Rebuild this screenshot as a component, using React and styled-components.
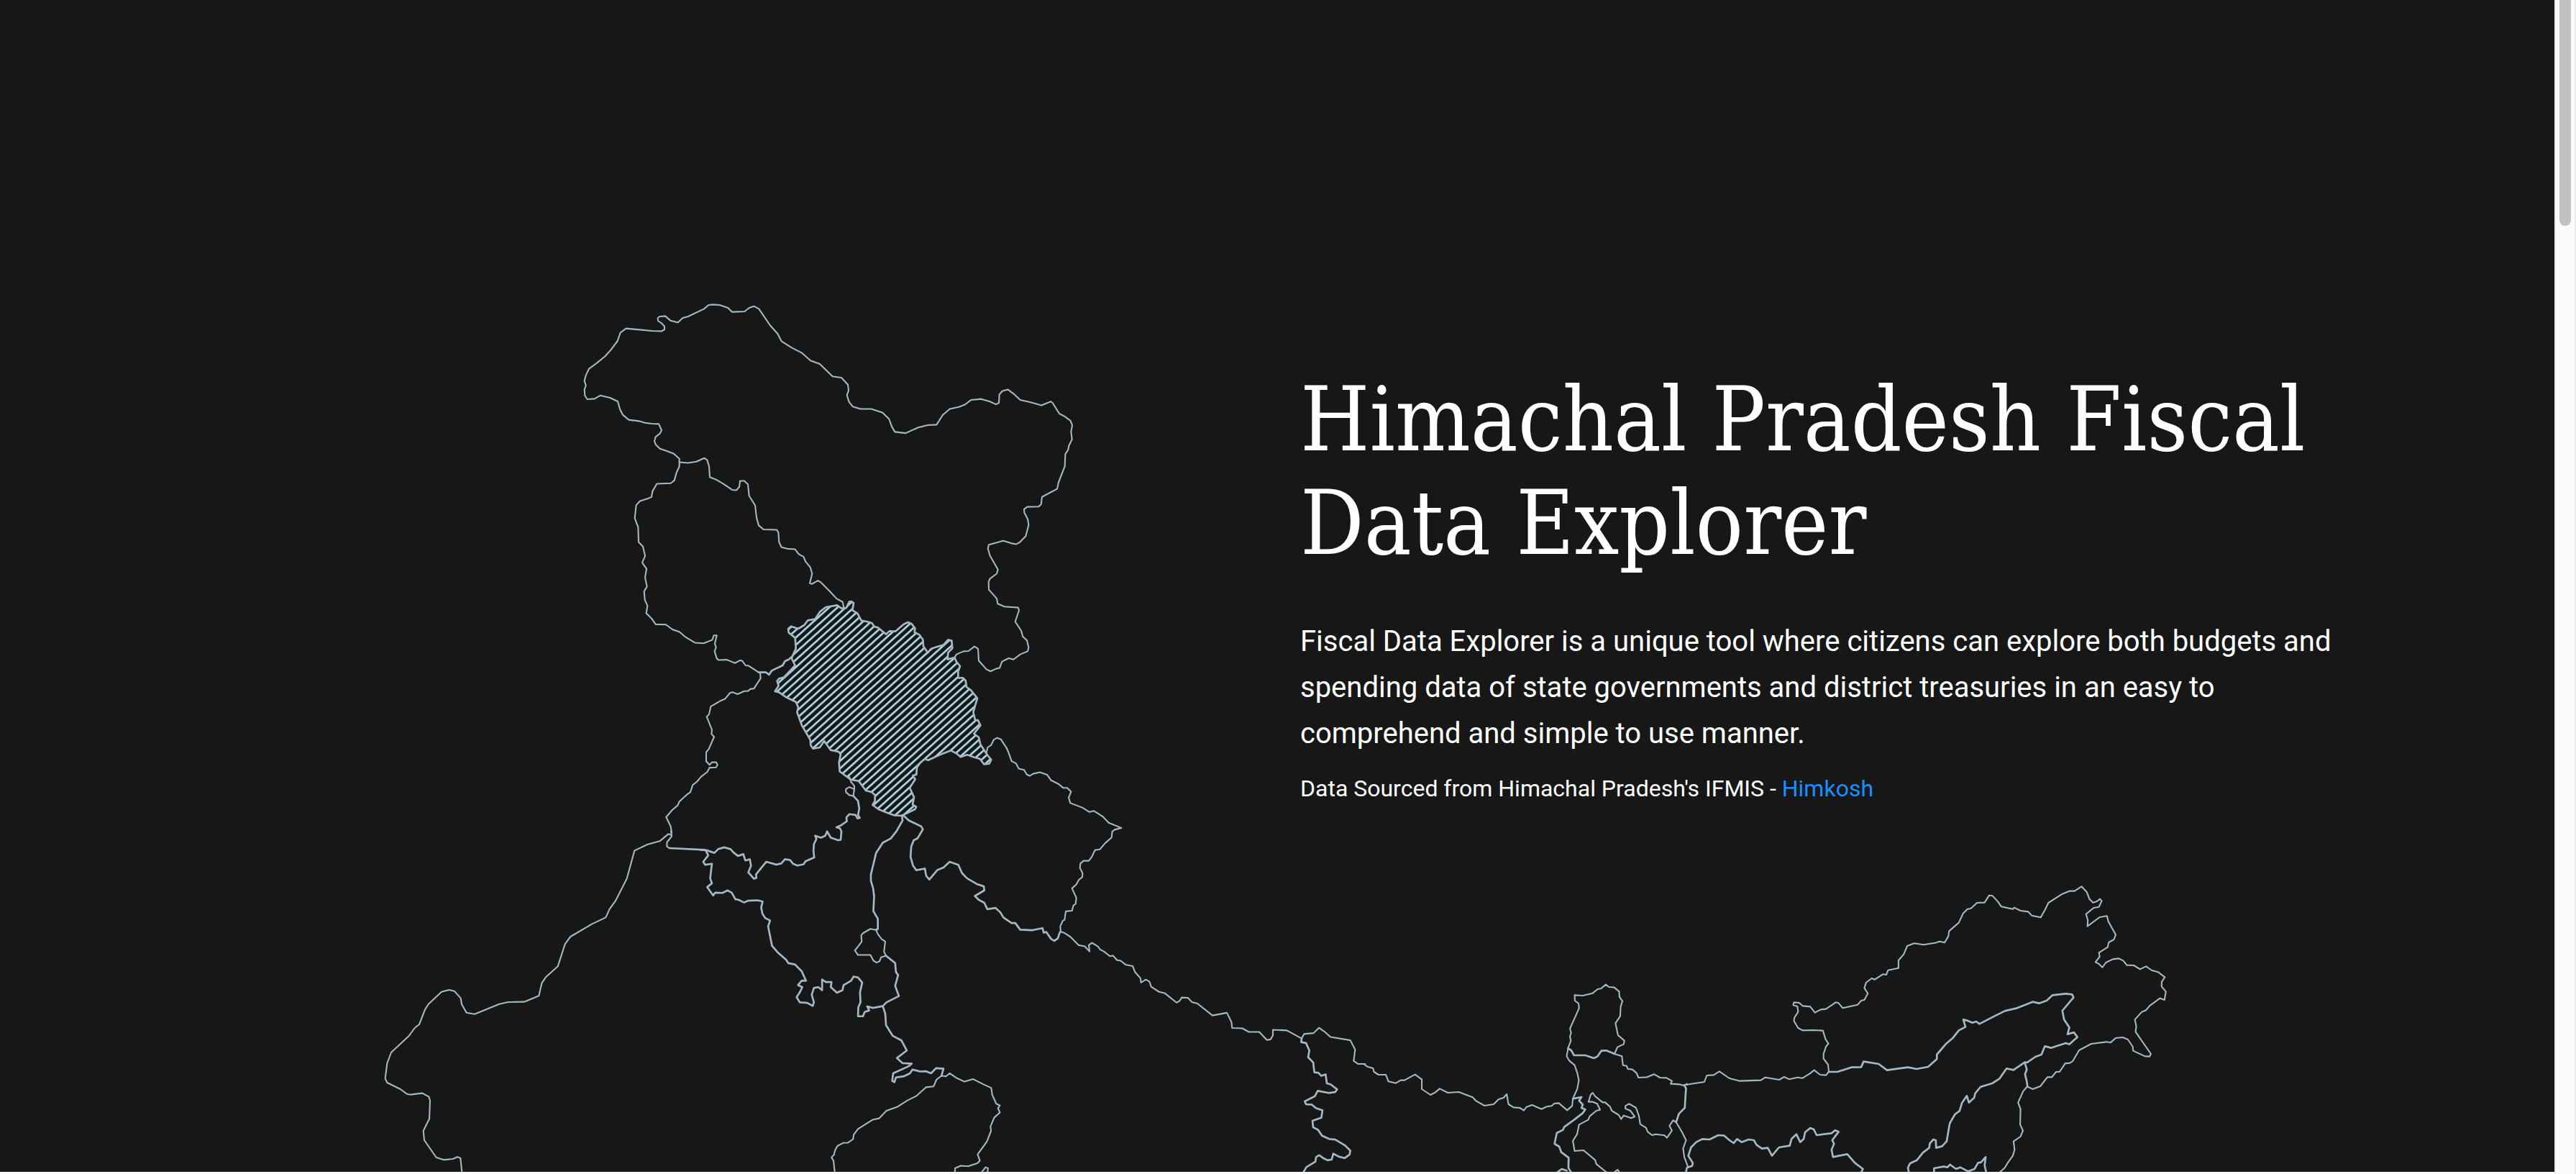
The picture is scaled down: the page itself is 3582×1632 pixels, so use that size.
import React from 'react';
import styled, { createGlobalStyle } from 'styled-components';

const GlobalStyle = createGlobalStyle`
  *, *::before, *::after { box-sizing: border-box; }
  body { margin: 0; background: #ffffff; overflow: hidden; }
`;

const Window = styled.div`
  display: grid;
  grid-template-columns: 1fr 30px;
  height: 100vh;
`;

const Hero = styled.main`
  display: grid;
  grid-template-columns: 1fr 1fr;
  margin-bottom: 3px;
  overflow: hidden;
  background: #171717;
  color: #ffffff;
`;

const StateMap = styled.svg`
  grid-area: 1 / 1 / 2 / 3;
  display: block;
  width: 100%;
  height: 100%;
  min-height: 0;
`;

const Border = styled.path`
  fill: ${(p) => p.$fill || 'none'};
  stroke: #a3b8c2;
  stroke-width: ${(p) => (p.$shared ? '2.7px' : '2.1px')};
  stroke-linejoin: round;
  stroke-linecap: round;
  vector-effect: non-scaling-stroke;
`;

const Intro = styled.section`
  grid-area: 1 / 2 / 2 / 3;
  padding: 512px 256px 0 32px;
`;

const Title = styled.h1`
  margin: 0 0 60px;
  font: 400 123px/144px 'DejaVu Serif Condensed', 'DejaVu Serif', serif;
`;

const Lead = styled.p`
  margin: 0 0 20px;
  font: 400 40px/64px Roboto, sans-serif;
`;

const Source = styled.p`
  margin: 0;
  font: 400 32px/48px Roboto, sans-serif;
`;

const SourceLink = styled.a`
  color: #1890ff;
  text-decoration: none;
`;

const ScrollTrack = styled.div`
  display: flex;
  justify-content: center;
  background: #fafafa;
  border-left: 2px solid #e8e8e8;
  border-right: 2px solid #ededed;
`;

const ScrollThumb = styled.div`
  width: 16px;
  height: 314px;
  border-radius: 0 0 8px 8px;
  background: #c1c1c1;
`;

/* Each sheet of the map has its own origin and its own drawing units per pixel. */
const SHEETS = [
  {
    name: 'ladakh-west',
    at: [780, 400], units: [3, 3],
    lines: [
      'M494,727 494,713 471,692 440,680 413,671 396,655 390,640 395,622 413,608 420,594 408,568 380,567 350,563 325,556 283,551 258,530 246,506 237,474 205,459 165,449 140,463 110,465 100,450 98,425 104,408 98,388 104,365 117,338 150,314 185,285 210,257 236,222 248,187 272,170 330,175 380,180 420,181 432,174 432,161 420,148 405,138 404,126 412,120 435,118 457,137 488,145 508,126 530,120 597,88 616,72 635,70 662,72 697,84 714,101 766,99 785,84 805,77 826,88 872,156 904,192 920,223 963,250 1004,271 1041,304 1080,318 1133,370 1170,375 1197,404',
    ],
  },
  {
    name: 'ladakh-east',
    at: [1130, 400], units: [3, 2.8],
    lines: [
      'M147,377 150,400 143,418 152,445 168,463 200,472 245,472 291,486 319,511 330,540 343,561 388,566 440,544 480,535 517,533 543,495 572,472 610,464 635,455 660,437 703,433 740,443 765,454 777,448 779,415 792,402 814,396 840,414 866,437 910,446 954,458 993,443 1001,448 1029,490 1050,500 1075,517 1083,535 1078,560 1082,590 1069,615 1066,630 1054,648 1052,695 1026,757 1020,783 985,800 957,814 953,843 943,852 895,853 882,862 883,875 897,900 901,923 889,967 865,990 850,998 830,995 795,985 735,1000 731,1015 740,1043 773,1097 768,1113 740,1132 734,1145 735,1175 768,1210 772,1230 800,1241 857,1245 861,1255 845,1300 870,1335 877,1358 894,1373 901,1400 897,1415 866,1427 838,1447 818,1442 790,1455 780,1480 765,1483 742,1493 725,1485 693,1452 690,1405 675,1396 650,1414 630,1415 600,1427 592,1440',
    ],
  },
  {
    name: 'kashmir-punjab',
    at: [820, 600], units: [3, 2.8],
    lines: [
      'M374,119 410,122 445,117 478,103 490,110 498,135 501,177 530,188 560,205 595,227 612,228 624,215 627,192 645,192 660,205 665,250 690,287 696,335 705,365 725,381 780,382 787,392 790,430 800,450 825,456 857,458 872,477 892,487 900,505 920,528 928,553 918,590 927,593 952,580 965,587 1000,620 1030,650 1055,663 1060,685',
      'M374,119 374,135 362,160 353,190 338,201 280,203 262,232 258,254 245,260 210,270 194,286 188,337 202,372 204,430 222,447 231,484 219,510 237,534 231,568 239,603 227,622 230,655 241,678 236,707 258,727 275,750 318,751 345,770 375,780 400,800 440,822 475,824 511,811 518,793 530,793 522,825 527,840 521,855 530,883 537,889 572,888 606,901 628,890 637,893 650,910 662,911 705,937',
      'M711,937 713,960 685,1000 670,1002 660,1010 645,1010 617,1022 595,1014 585,1017 565,1040 545,1048 505,1070 498,1100 488,1110 510,1160 508,1177 519,1188 497,1235 486,1248 486,1283 500,1297 510,1287 528,1287 533,1297 527,1307 500,1308 490,1325 465,1343 447,1363 430,1375 420,1403 405,1413 374,1440 367,1455 345,1472 319,1500 338,1537 342,1562',
    ],
    shared: ['M705,937 735,937 748,946 760,930 805,910 815,893 830,887 845,875'],
  },
  {
    name: 'rajasthan',
    at: [500, 1130], units: [3, 3],
    lines: [
      'M1299,75 1302,98 1282,123 1282,140 1292,147',
      'M1300,92 1288,88 1252,118 1200,132 1147,157 1115,274 1067,368 1043,401 1027,436 970,463 880,516 857,547 827,640 777,685 760,710 748,763 687,788 620,789 583,797 480,839 446,833 426,798 422,773 395,743 374,738 342,746 287,798 273,820 249,882 230,897 206,930 132,999 115,1044 107,1108 115,1125 170,1152 197,1172 213,1175 262,1169 289,1184 294,1200 291,1276 266,1326 270,1365 320,1437 351,1447 390,1443 408,1435 421,1440 428,1510',
    ],
    shared: ['M1292,147 1440,154'],
  },
  {
    name: 'haryana-uttar-pradesh',
    at: [940, 1080], units: [2.904, 2.84],
    lines: [
      'M700,0 707,20 720,35 720,50 716,75 700,72 686,60 686,48 700,40 718,48',
      'M808,604 785,600 755,617 748,625 750,650 735,670 722,685 735,703 785,703 797,725 810,733 822,728 828,712 848,706 840,690 845,650 830,640 815,620 Z',
      'M1072,1180 1090,1182 1105,1170 1130,1187 1165,1203 1200,1193 1240,1213 1273,1228 1277,1255 1293,1290 1308,1297 1300,1308 1308,1325 1285,1345 1270,1380 1272,1398 1255,1440 1235,1467 1218,1490 1227,1515 1217,1525 1180,1537 1150,1535 1127,1545 1126,1570',
      'M1072,1180 1052,1195 1040,1222 1010,1225 970,1260 935,1277 895,1302 850,1318 820,1348 795,1353 735,1390 718,1412 715,1430 695,1444 675,1445 652,1457 642,1475 638,1492 628,1502 636,1515 642,1570',
      'M1232,1564 1250,1541 1260,1545 1257,1564',
    ],
    shared: [
      'M716,75 735,95 740,125 735,150 742,162 733,164 725,150 700,147 688,160 690,175 665,192 648,199 662,203 668,215 665,248 655,250 625,240 610,215 603,232 585,240 562,232 567,245 557,265 555,290 558,318 523,333 515,345 490,350 473,343 460,328 440,325 425,342 405,346 365,335 345,358 323,385 325,398 315,402 292,377 303,350 298,325 280,330 272,305 250,312 232,298 220,285 195,278 170,285 155,300 125,290 100,288',
      'M120,290 130,310 110,335 118,347 145,343 138,400 145,420 126,435 150,468 158,457 188,458 208,448 225,457 240,483 252,485 275,496 290,489 330,487 350,492 344,515 349,540 360,557 380,567 372,590 378,620 388,667 410,692 445,722 453,735 480,740 508,768 525,805 508,804 493,822 510,830 500,850 487,870 500,890 530,892 552,904 557,890 548,860 557,833 575,830 590,842 590,800 605,810 628,810 625,830 650,852 672,842 677,822 707,805 717,788 735,792 752,812 743,850 745,890 736,910 735,945 755,945 762,928 780,922 772,906 795,912 835,905',
      'M912,152 915,172 890,215 867,243 835,260 808,300 797,345 787,385 787,410 796,440 800,470 797,530 815,560 815,600 808,604',
      'M848,706 885,735 888,770 897,782 885,825 900,865 850,890 835,905 845,935 848,980 875,1022 910,1040 932,1080 892,1110 915,1130 952,1132 940,1142 877,1170 873,1200 882,1205 888,1187 920,1182 945,1170 955,1155 985,1163 1010,1162 1030,1170 1050,1150 1080,1152 1072,1180',
      'M918,152 940,172 990,195 997,207 975,243 960,250 950,275 947,315 957,350 970,368 1005,362 1010,390 1023,405 1055,368 1080,358 1105,335 1140,347 1155,380 1175,400 1215,423 1243,432 1245,448 1207,470 1222,485 1245,497 1257,522 1290,517 1310,535 1322,555 1355,577 1370,577 1390,603 1440,605 1480,597 1485,615 1495,612 1515,640 1528,647 1542,637 1550,613',
    ],
  },
  {
    name: 'uttarakhand-nepal',
    at: [1400, 980], units: [3, 2.405],
    lines: [
      'M225,758 223,740 233,722 241,718 246,690 272,688 278,670 287,665 290,645 272,613 290,600 300,585 315,575 316,562 305,545 307,530 320,521 342,521 355,507 368,485 388,483 410,462 437,443 440,423 450,417 478,411 425,394 400,373 363,354 345,358 315,343 265,328 258,310 268,290 252,277 235,277 215,264 185,252 168,233 138,225 110,230 95,237 83,232 72,217 50,213 38,195 20,188 10,165 0,145',
      'M225,758 240,762 265,775 300,803 325,807 345,824 342,803 355,795 380,807 390,818 405,824 430,840 443,838 460,853 475,855 495,868 525,873 535,893 557,913 560,928 580,918 595,925 602,942 635,959 658,963 708,995 720,990 730,978 755,979 772,993 795,998 858,1038 918,1029 937,1060 940,1080 982,1081 1010,1093 1053,1093 1085,1120 1100,1118 1110,1105 1110,1086 1168,1088 1230,1115',
      'M1230,1115 1240,1100 1280,1097 1302,1079 1325,1092 1350,1110 1433,1121 1453,1152 1447,1190 1465,1200 1495,1200',
    ],
    shared: [
      'M1230,1115 1228,1127 1248,1130 1262,1155 1257,1178 1278,1195 1283,1228 1300,1230 1312,1240 1330,1235 1335,1265 1350,1268 1378,1285 1370,1294 1342,1297 1297,1290 1285,1308 1243,1325 1248,1335 1272,1336 1290,1348 1317,1355 1312,1380 1275,1390 1278,1412 1298,1420 1315,1440 1345,1451 1370,1453 1410,1472 1433,1490 1430,1503 1410,1515 1385,1510 1362,1500 1355,1520 1338,1522 1320,1515 1303,1505 1290,1512 1287,1527 1250,1545 1235,1565',
    ],
  },
  {
    name: 'sikkim-bengal',
    at: [1860, 1340], units: [2.904, 3],
    lines: [
      'M105,417 120,428 143,435 147,450 165,462 195,462 205,490 235,497 255,485 270,485 313,461 340,482 340,522 375,546 395,535 412,520 445,537 490,534 545,556 560,572 593,591 630,585 650,565 670,558 683,543 690,585 710,598 735,600 752,611 762,597 785,588 823,605 845,595 865,592 875,582 893,580 927,610 947,592 950,562 968,520 974,485 968,455 957,422 935,403 925,385 931,350 942,320 938,303 943,287 938,270 975,185 973,165 958,153 957,130 990,132 1030,122 1050,105 1063,103 1083,86 1095,96 1117,98 1137,115 1138,137 1150,155 1143,178 1141,218 1122,247 1132,297 1158,320 1155,335 1130,347 1118,375',
      'M1118,375 1148,385 1152,422 1167,425 1172,438 1190,440 1207,455 1215,474 1250,472 1278,460 1302,474 1328,475 1350,488 1345,500 1380,502 1400,508 1410,500',
      'M1367,660 1390,700 1407,735 1395,770 1400,805 1415,847',
      'M1367,660 1355,652 1340,675 1350,695 1330,725 1320,715 1285,710 1270,714 1252,700 1245,683 1222,668 1217,635 1205,600 1177,583 1162,592 1162,603 1182,612 1200,637 1185,643 1155,632 1145,647 1135,630 1107,612 1100,595 1080,577 1070,577 1040,552 1030,537 1022,545 1013,575 1030,575 1048,583 1060,608 1045,612 1018,635 1012,650 975,670 967,710 950,738 957,780 993,777 1040,818 1045,835 1085,868',
      'M1118,868 1130,858 1138,868',
    ],
    shared: [
      'M931,352 943,360 955,381 1000,381 1035,393 1050,385 1065,362 1085,361 1118,375',
      'M1400,505 1407,520 1405,545 1402,600 1378,625 1367,660',
      'M950,562 985,555 975,570 990,587 985,600 1000,607 990,622 955,650 915,680 910,692 885,705 876,750 895,762 903,785 933,808 932,850 942,868',
      'M888,868 905,855 925,862',
    ],
  },
  {
    name: 'assam-arunachal',
    at: [2320, 1210], units: [2.063, 3],
    lines: [
      'M48,895 65,890 103,882 110,855 130,853 146,838 175,867 205,878 265,875 278,863 318,873 332,861 347,871 370,863 385,866 405,848 418,833 435,852 452,854 460,840',
      'M460,840 458,810 445,785 445,765 452,735 459,722 451,705 443,668 415,666 385,667 372,657 360,628 361,615 372,590 370,567 358,562 360,550 375,552 385,565 407,568 420,593 437,580 452,578 480,550 488,553 500,574 543,560 553,543 562,540 572,513 562,490 567,468 583,450 592,455 615,433 625,435 630,416 660,407 660,375 675,350 685,315 705,304 732,310 765,302 778,296 792,301 803,275 805,253 833,218 845,180 857,162 868,158 885,135 907,134 920,104 930,106 945,130 955,151 988,161 992,155 1010,168 1032,172 1042,188 1068,196 1080,165 1090,135 1130,98 1150,86 1165,86 1185,67 1200,90 1208,120 1218,134 1228,130 1238,119 1243,127 1235,152 1220,156 1198,182 1203,207 1202,233 1237,195 1258,190 1262,213 1283,268 1278,288 1263,300 1260,320 1235,343 1237,360 1225,382 1235,390 1245,404 1255,384 1275,370 1292,367 1305,377 1315,395 1335,396 1353,412 1370,400 1387,417 1405,424 1424,445 1415,465 1415,485 1427,505 1423,540 1410,533 1380,565 1370,583 1358,590 1338,622 1342,650 1340,673 1384,765 1380,776 1367,775 1333,752 1332,735 1318,705 1303,696 1283,699 1268,718 1257,715 1213,723 1178,750 1160,795 1152,803 1138,805 1122,840 1112,840 1100,862 1087,862 1067,900 1045,912 1030,902',
      'M1030,900 1018,920 1003,968 1010,995 1009,1060 1017,1085 1010,1110 990,1130 993,1165 988,1190 973,1220 965,1240 948,1262',
    ],
    shared: [
      'M460,840 485,840 525,821 553,820 560,797 603,807 627,833 687,821 712,828 745,819 770,787 770,768 797,722 815,700 833,667 852,653 846,622 855,625 872,635 883,630 892,640 935,608 965,586 1000,574 1045,548 1063,554 1085,543 1102,520 1140,514 1158,517 1162,530 1130,585 1135,622 1150,655 1145,683 1163,675 1173,695 1150,725 1140,720 1097,740 1080,733 1070,768 1053,777 1030,800 1020,802 990,832 970,826 950,868 930,887 895,903 880,930 877,948 862,968 856,940 842,970 835,1003 822,1017 807,1055 798,1130 785,1150 768,1157 767,1125 760,1122 750,1138 748,1157 730,1177 713,1208 693,1222 687,1240 690,1262',
      'M1022,800 1028,830 1023,850 1028,880 1030,902',
      'M762,1262 762,1242 790,1235 800,1238 808,1227 825,1245 837,1238 860,1255 878,1245 888,1220 897,1217 910,1195 907,1230 912,1262',
      'M50,1262 53,1240 68,1232 70,1220 57,1190 65,1155 80,1133 97,1120 118,1122 143,1104 160,1106 175,1125 187,1137 197,1120 210,1133 230,1122 245,1125 253,1145 268,1160 285,1157 297,1190 317,1155 348,1148 353,1120 367,1100 378,1133 388,1120 392,1092 407,1074 417,1080 425,1104 468,1096 478,1084 488,1090 470,1125 475,1140 468,1165 472,1195 513,1183 535,1220 558,1245 552,1262',
    ],
  },
  {
    name: 'himachal',
    at: [1040, 800], units: [3, 3],
    lines: ['M995,740 1000,717 1015,707 1025,685 1040,677 1055,683 1080,721'],
    hatched:
      'M432,108 441,115 436,145 457,158 473,188 495,192 517,198 527,213 542,217 560,232 577,245 590,232 615,233 650,203 668,195 683,202 697,220 695,237 715,247 730,268 732,295 750,322 765,305 780,300 815,290 835,268 850,272 853,303 835,322 833,350 862,342 870,360 885,378 877,400 877,427 897,427 908,438 912,465 930,478 957,512 940,570 948,602 960,604 970,625 943,660 963,675 970,705 1000,750 1015,768 1007,785 985,787 968,765 945,758 915,748 887,757 870,742 847,730 800,748 752,770 738,765 720,780 705,800 703,830 688,835 698,850 675,885 693,925 687,955 702,965 697,975 640,1002 610,1000 590,993 545,975 520,957 530,940 530,915 515,903 492,897 462,857 430,852 383,817 380,780 387,745 378,735 345,728 318,690 300,717 272,722 262,708 260,685 225,625 205,570 210,550 200,527 160,508 130,487 113,483 128,460 122,440 130,430 150,425 197,375 182,345 200,305 197,260 170,238 168,222 180,212 210,222 235,207 250,187 280,182 300,152 325,132 372,124 390,137 410,135 418,120 422,110 Z',
  },
];

const placeSheet = ({ at: [x, y], units: [ux, uy] }) =>
  `translate(${x} ${y}) scale(${1 / ux} ${1 / uy})`;

function IndiaMap() {
  return (
    <StateMap viewBox="0 0 3552 1629" preserveAspectRatio="xMinYMin slice" aria-hidden="true">
      <defs>
        <pattern
          id="hatch"
          width="23"
          height="23"
          patternUnits="userSpaceOnUse"
          patternTransform="rotate(-42)"
        >
          <rect width="23" height="8" fill="#add8e6" />
        </pattern>
      </defs>
      {SHEETS.map((s) => (
        <g key={s.name} transform={placeSheet(s)}>
          {s.lines.map((d) => (
            <Border key={d} d={d} />
          ))}
          {(s.shared || []).map((d) => (
            <Border key={d} d={d} $shared />
          ))}
          {s.hatched && <Border d={s.hatched} $shared $fill="url(#hatch)" />}
        </g>
      ))}
    </StateMap>
  );
}

export default function App() {
  return (
    <>
      <GlobalStyle />
      <Window>
        <Hero>
          <IndiaMap />
          <Intro>
            <Title>Himachal Pradesh Fiscal Data Explorer</Title>
            <Lead>
              Fiscal Data Explorer is a unique tool where citizens can explore both budgets and
              spending data of state governments and district treasuries in an easy to comprehend
              and simple to use manner.
            </Lead>
            <Source>
              Data Sourced from Himachal Pradesh's IFMIS -{' '}
              <SourceLink href="#himkosh">Himkosh</SourceLink>
            </Source>
          </Intro>
        </Hero>
        <ScrollTrack>
          <ScrollThumb />
        </ScrollTrack>
      </Window>
    </>
  );
}
